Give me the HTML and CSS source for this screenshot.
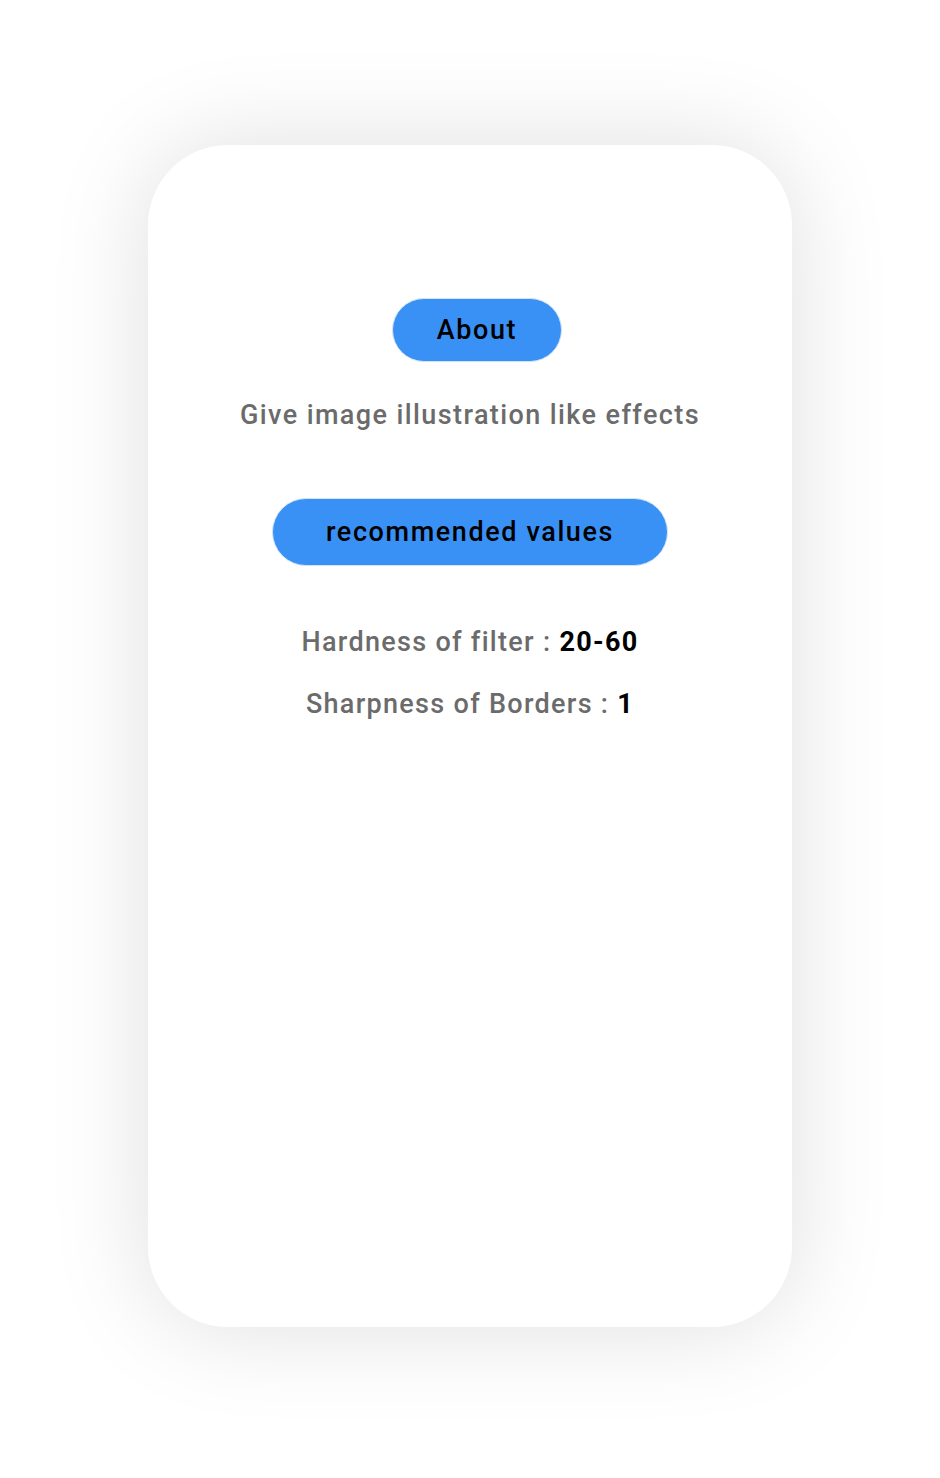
FILE: index.html
```html
<!DOCTYPE html>
<html>
<head>
    <title>About</title>
    <link rel="stylesheet" href="styles.css">
</head>
<body>
    <div class="phone">
        <div class="about-panel">
            <div class="pill about-btn">About</div>
            <div class="about-text">Give image illustration like effects</div>
            <div class="pill values-btn">recommended values</div>
            <div class="value-row">Hardness of filter : <b>20-60</b></div>
            <div class="value-row">Sharpness of Borders : <b>1</b></div>
        </div>
    </div>
</body>
</html>
```

FILE: styles.css
```css
body {
    margin: 0;
    padding: 145px 0 151px;
    background-color: #fff;
    font-family: Roboto, "Noto Sans", sans-serif;
}
.phone {
    width: 644px;
    height: 1182px;
    margin: 0 auto;
    background-color: #fff;
    border-radius: 80px;
    box-shadow: 0 0 100px rgba(0, 0, 0, 0.13);
}
.about-panel {
    display: flex;
    flex-direction: column;
    align-items: center;
    padding-top: 153px;
}
.pill {
    background-color: #3a91f5;
    border: 1px solid #cfe3fb;
    border-radius: 40px;
    color: #000;
    font-size: 27px;
    font-weight: 500;
    letter-spacing: 1.6px;
    box-sizing: border-box;
    display: flex;
    align-items: center;
    justify-content: center;
}
.about-btn {
    width: 170px;
    height: 64px;
    margin-left: 14px;
}
.about-text {
    color: #6b6b6b;
    font-size: 27px;
    font-weight: 500;
    letter-spacing: 1.4px;
    margin-top: 37px;
}
.values-btn {
    width: 396px;
    height: 68px;
    margin-top: 67px;
}
.value-row {
    color: #6b6b6b;
    font-size: 27px;
    font-weight: 500;
    letter-spacing: 1.3px;
    margin-top: 60px;
}
.value-row + .value-row {
    margin-top: 30px;
}
.value-row b {
    color: #000;
    font-weight: 700;
}
```
